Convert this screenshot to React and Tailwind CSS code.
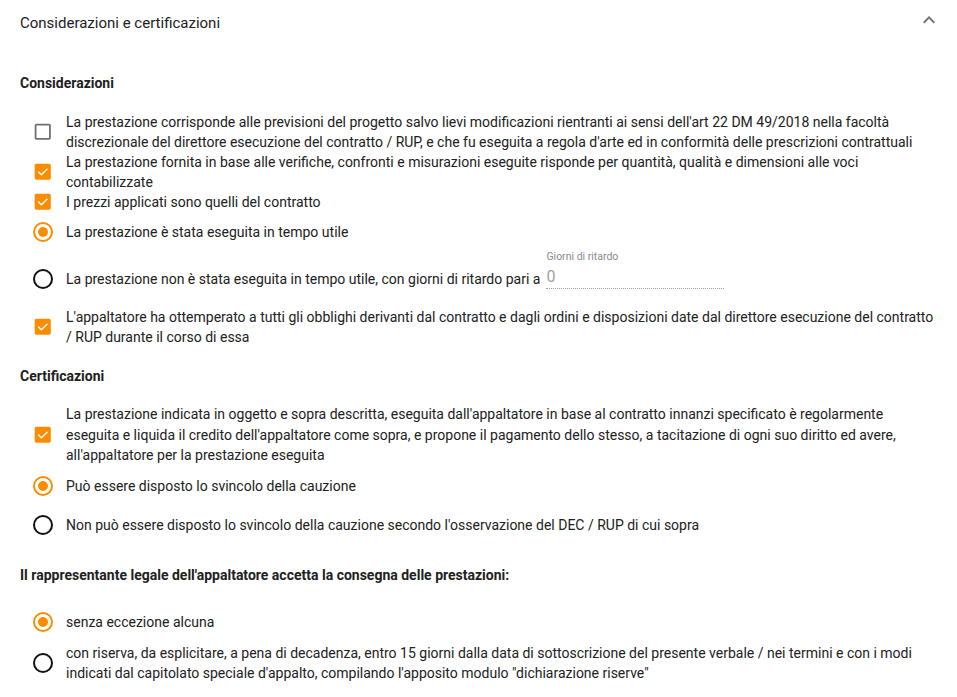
import React from "react";

const ORANGE = "#fb8c00";

function Checkbox({ checked }) {
  if (checked) {
    return (
      <svg viewBox="0 0 24 24" className="w-[21.5px] h-[21.5px]">
        <path
          fill={ORANGE}
          d="M19,3H5C3.89,3 3,3.89 3,5V19A2,2 0 0,0 5,21H19A2,2 0 0,0 21,19V5C21,3.89 20.1,3 19,3Z"
        />
        <path
          d="M7.3,12.3L10.5,15.4L16.8,9.1"
          fill="none"
          stroke="#fff"
          strokeWidth="1.5"
          strokeLinecap="round"
          strokeLinejoin="round"
        />
      </svg>
    );
  }
  return (
    <svg viewBox="0 0 24 24" className="w-[21.5px] h-[21.5px]">
      <path
        fill="#6f6f6f"
        d="M19,3H5C3.89,3 3,3.89 3,5V19A2,2 0 0,0 5,21H19A2,2 0 0,0 21,19V5C21,3.89 20.1,3 19,3M19,5V19H5V5H19Z"
      />
    </svg>
  );
}

function Radio({ checked }) {
  if (checked) {
    return (
      <svg viewBox="0 0 24 24" className="w-[24px] h-[24px]">
        <path
          fill={ORANGE}
          d="M12,20A8,8 0 0,1 4,12A8,8 0 0,1 12,4A8,8 0 0,1 20,12A8,8 0 0,1 12,20M12,2A10,10 0 0,0 2,12A10,10 0 0,0 12,22A10,10 0 0,0 22,12A10,10 0 0,0 12,2M12,7A5,5 0 0,0 7,12A5,5 0 0,0 12,17A5,5 0 0,0 17,12A5,5 0 0,0 12,7Z"
        />
      </svg>
    );
  }
  return (
    <svg viewBox="0 0 24 24" className="w-[24px] h-[24px]">
      <path
        fill="#111"
        d="M12,20A8,8 0 0,1 4,12A8,8 0 0,1 12,4A8,8 0 0,1 20,12A8,8 0 0,1 12,20M12,2A10,10 0 0,0 2,12A10,10 0 0,0 12,22A10,10 0 0,0 22,12A10,10 0 0,0 12,2Z"
      />
    </svg>
  );
}

function Row({ icon, className = "", children }) {
  return (
    <div className={`flex items-center ml-[11px] ${className}`}>
      <div className="w-[24px] h-[20px] flex items-center justify-center shrink-0">
        {icon}
      </div>
      <div className="ml-[11px] leading-[20px]">{children}</div>
    </div>
  );
}

export default function App() {
  return (
    <div
      className="w-[957px] min-h-[697px] bg-white text-[#212121] text-[14px] pt-[1px]"
      style={{ fontFamily: "Roboto, 'Liberation Sans', sans-serif" }}
    >
      <div className="h-[44px] flex items-center justify-between pl-[20px] pr-[16px]">
        <div className="text-[15px] leading-[20px] text-[#212121]">
          Considerazioni e certificazioni
        </div>
        <svg viewBox="0 0 24 24" className="w-[24px] h-[24px] mt-[-7px]">
          <path
            fill="#757575"
            d="M7.41,15.41L12,10.83L16.59,15.41L18,14L12,8L6,14L7.41,15.41Z"
          />
        </svg>
      </div>

      <div className="px-[20px]">
        <div className="mt-[28px] font-bold leading-[20px]">Considerazioni</div>

        <Row className="mt-[19px]" icon={<Checkbox checked={false} />}>
          La prestazione corrisponde alle previsioni del progetto salvo lievi
          modificazioni rientranti ai sensi dell'art 22 DM 49/2018 nella facoltà
          discrezionale del direttore esecuzione del contratto / RUP, e che fu
          eseguita a regola d'arte ed in conformità delle prescrizioni
          contrattuali
        </Row>
        <Row icon={<Checkbox checked />}>
          La prestazione fornita in base alle verifiche, confronti e misurazioni
          eseguite risponde per quantità, qualità e dimensioni alle voci
          contabilizzate
        </Row>
        <Row icon={<Checkbox checked />}>I prezzi applicati sono quelli del contratto</Row>

        <Row className="mt-[10px]" icon={<Radio checked />}>
          La prestazione è stata eseguita in tempo utile
        </Row>

        <div className="flex items-end ml-[11px] mt-[7px]">
          <div className="flex items-center h-[20px]">
            <div className="w-[24px] h-[20px] flex items-center justify-center shrink-0">
              <Radio checked={false} />
            </div>
            <div className="ml-[11px] leading-[20px]">
              La prestazione non è stata eseguita in tempo utile, con giorni di
              ritardo pari a
            </div>
          </div>
          <div className="ml-[6px] w-[178px] flex flex-col">
            <div className="text-[10.5px] leading-[16px] text-[#8a8a8a]">
              Giorni di ritardo
            </div>
            <div className="h-[24px] flex items-center text-[16px] text-[#a0a0a0] border-b border-dotted border-[#9e9e9e]">
              0
            </div>
          </div>
        </div>

        <Row className="mt-[18px]" icon={<Checkbox checked />}>
          L'appaltatore ha ottemperato a tutti gli obblighi derivanti dal
          contratto e dagli ordini e disposizioni date dal direttore esecuzione
          del contratto / RUP durante il corso di essa
        </Row>

        <div className="mt-[19px] font-bold leading-[20px]">Certificazioni</div>

        <Row className="mt-[18px]" icon={<Checkbox checked />}>
          <span className="block leading-[20.5px]">
            La prestazione indicata in oggetto e sopra descritta, eseguita
            dall'appaltatore in base al contratto innanzi specificato è
            regolarmente eseguita e liquida il credito dell'appaltatore come
            sopra, e propone il pagamento dello stesso, a tacitazione di ogni suo
            diritto ed avere, all'appaltatore per la prestazione eseguita
          </span>
        </Row>

        <Row className="mt-[10px]" icon={<Radio checked />}>
          Può essere disposto lo svincolo della cauzione
        </Row>
        <Row className="mt-[19px]" icon={<Radio checked={false} />}>
          Non può essere disposto lo svincolo della cauzione secondo
          l'osservazione del DEC / RUP di cui sopra
        </Row>

        <div className="mt-[30px] font-bold leading-[20px]">
          Il rappresentante legale dell'appaltatore accetta la consegna delle
          prestazioni:
        </div>

        <Row className="mt-[27px]" icon={<Radio checked />}>
          senza eccezione alcuna
        </Row>
        <Row className="mt-[11px]" icon={<Radio checked={false} />}>
          con riserva, da esplicitare, a pena di decadenza, entro 15 giorni dalla
          data di sottoscrizione del presente verbale / nei termini e con i modi
          indicati dal capitolato speciale d'appalto, compilando l'apposito
          modulo "dichiarazione riserve"
        </Row>
      </div>
    </div>
  );
}
